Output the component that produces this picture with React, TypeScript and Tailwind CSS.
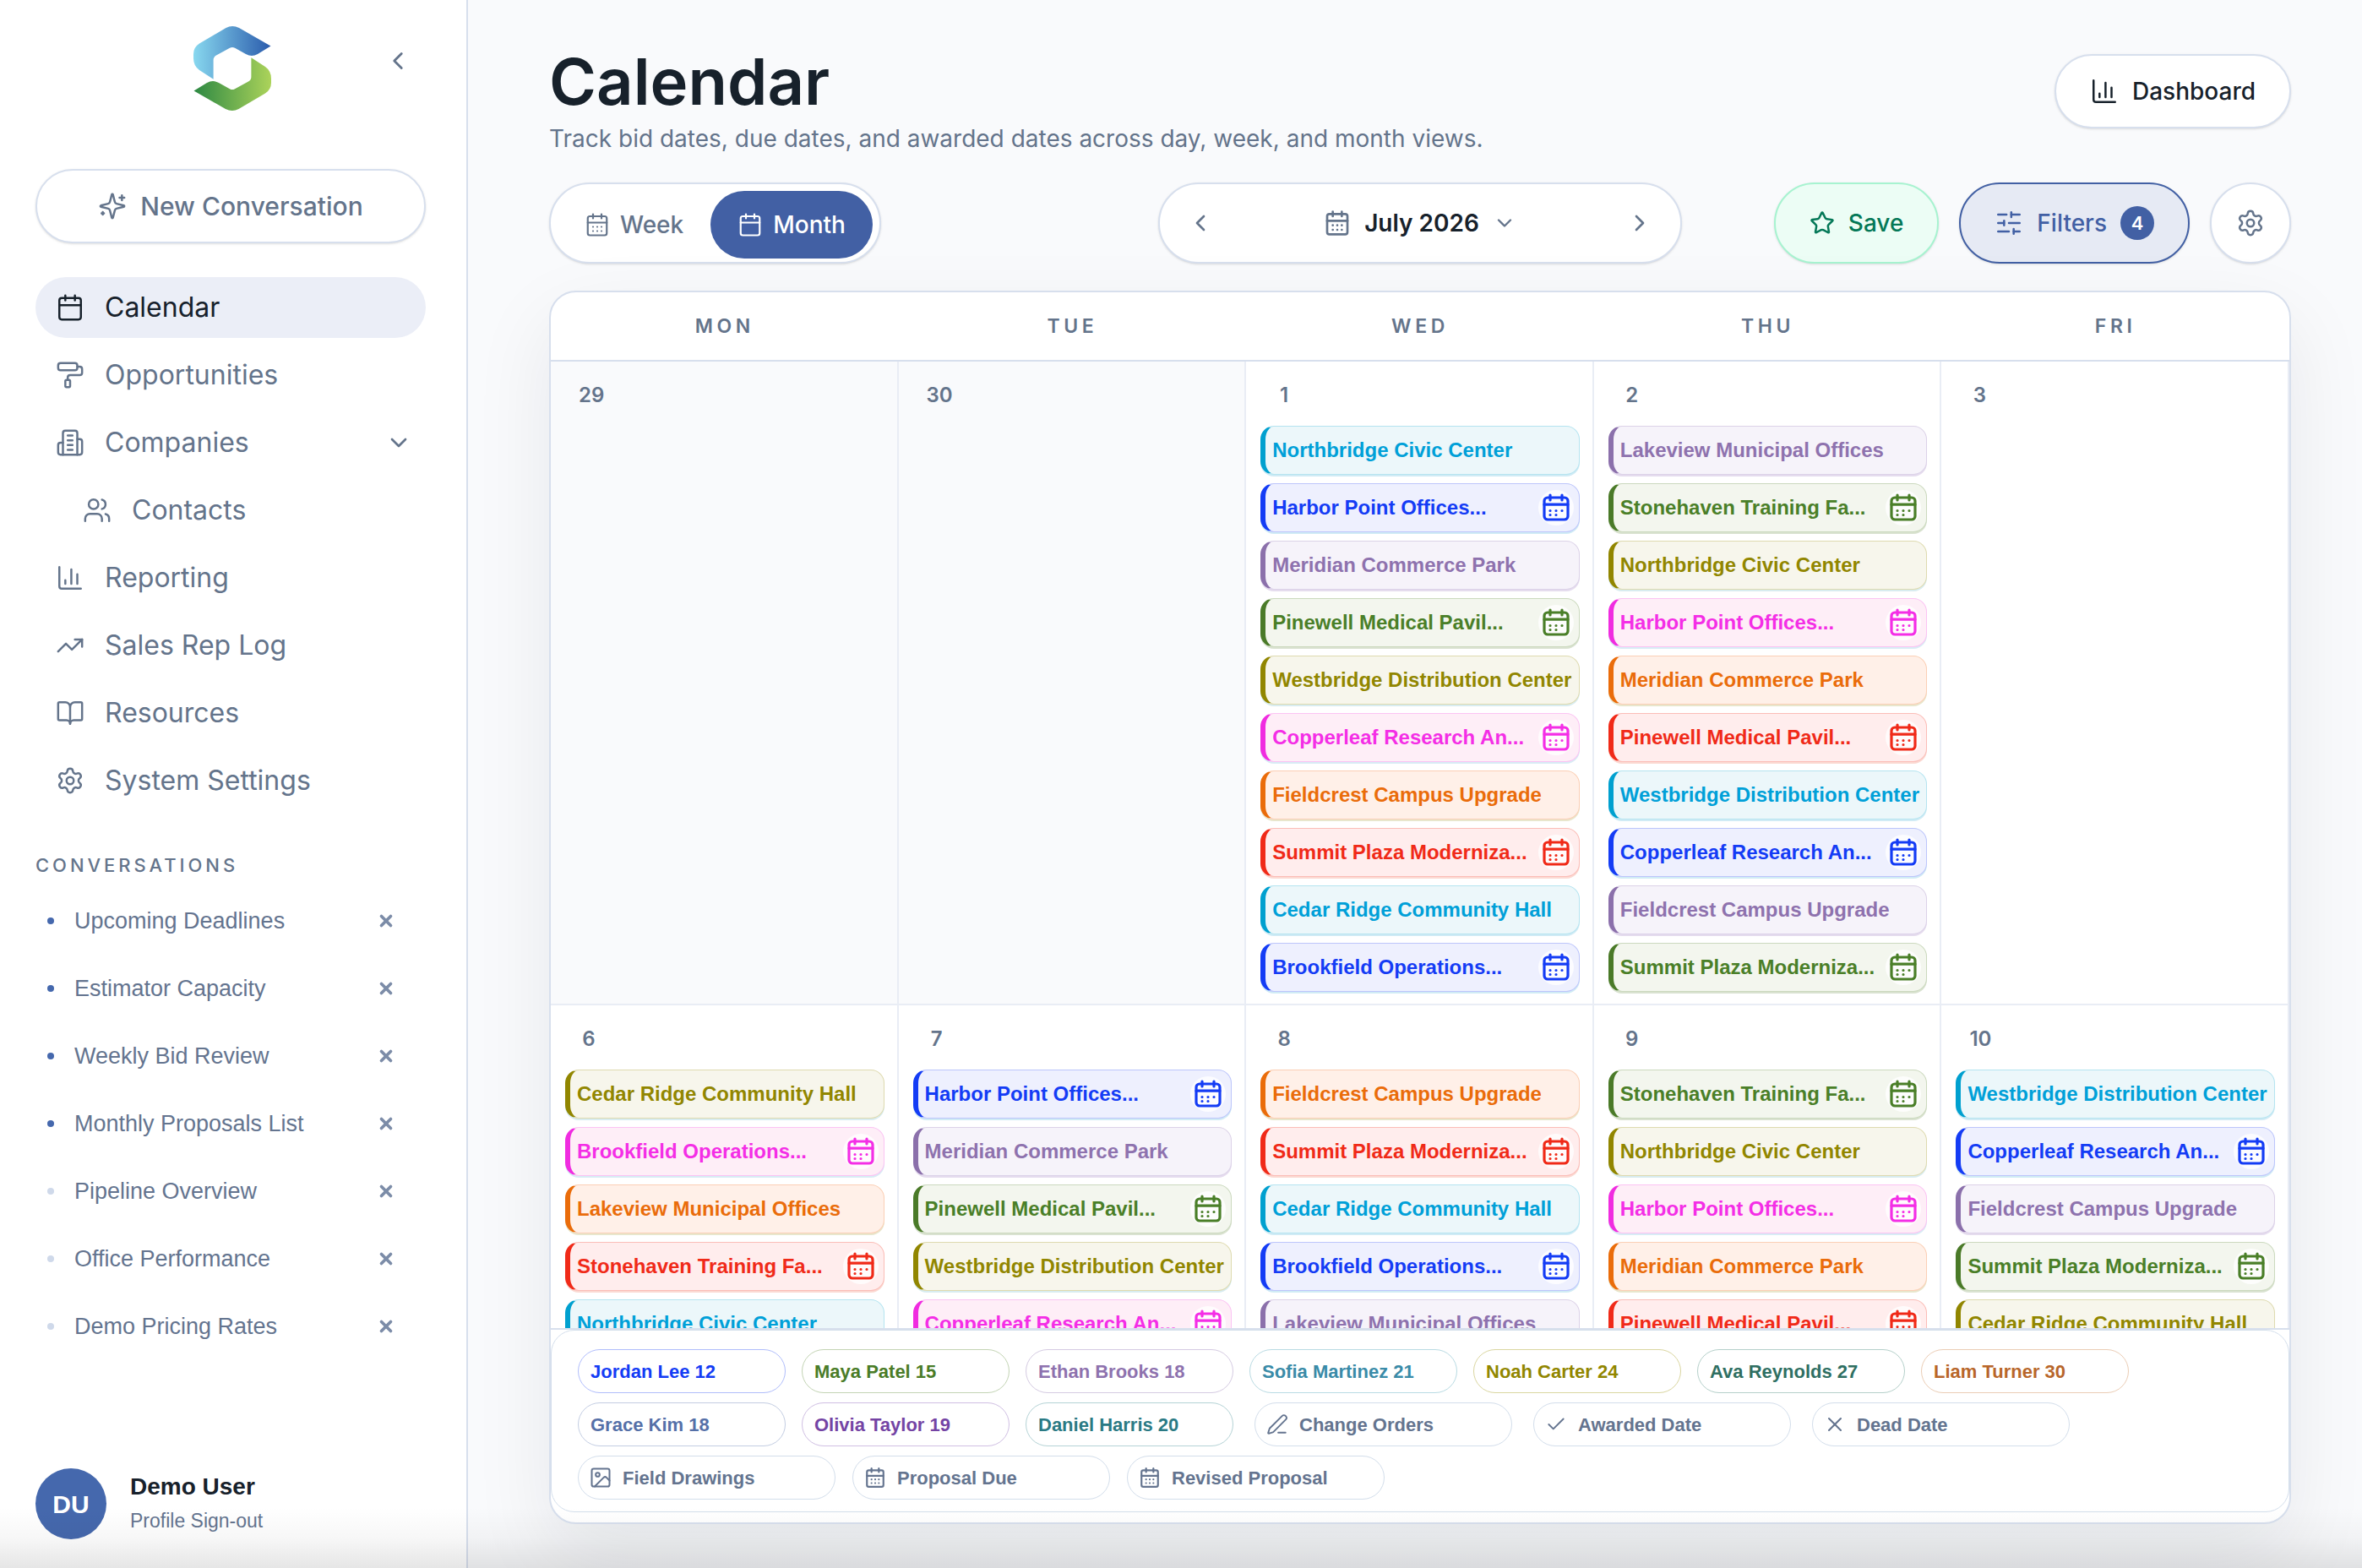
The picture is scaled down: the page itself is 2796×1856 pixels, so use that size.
import { useState } from 'react';
import type { ReactNode } from 'react';
import {
  BookOpen,
  Calendar,
  CalendarDays,
  ChartColumn,
  Check,
  ChevronDown,
  ChevronLeft,
  ChevronRight,
  Image,
  PaintRoller,
  PenLine,
  Settings,
  SlidersHorizontal,
  Star,
  TrendingUp,
  Users,
  X,
} from 'lucide-react';

const Logo = () => (
  <svg viewBox="0 0 92 100" className="h-[100px] w-[92px]" role="img" aria-label="Company logo">
    <defs>
      <linearGradient id="logo-blue" gradientUnits="userSpaceOnUse" x1="0" y1="0" x2="92" y2="0">
        <stop offset="0" stopColor="#88d8ef" />
        <stop offset="1" stopColor="#2a5bac" />
      </linearGradient>
      <linearGradient id="logo-green" gradientUnits="userSpaceOnUse" x1="92" y1="0" x2="0" y2="0">
        <stop offset="0" stopColor="#2c8843" />
        <stop offset="1" stopColor="#acd35a" />
      </linearGradient>
      <path
        id="logo-half"
        d="M91.5 23.5 54 2Q46-2 38.5 2L7 20.500Q0 25 0 33V38Q0 47 7 52L23.600 62.700V40Q23.600 36.500 27 34.500L43 25.800Q46 24 49 25.800L62 33Q69 37 76 33Z"
      />
    </defs>
    <use href="#logo-half" fill="url(#logo-blue)" />
    <use href="#logo-half" fill="url(#logo-green)" transform="rotate(180 46 50)" />
  </svg>
);

const SparklesIcon = () => (
  <svg
    viewBox="0 0 24 24"
    className="size-[34px]"
    fill="none"
    stroke="currentColor"
    strokeWidth={1.75}
    strokeLinecap="round"
    strokeLinejoin="round"
  >
    <path d="M9.937 15.500A2 2 0 0 0 8.500 14.063l-6.135-1.582a.5.5 0 0 1 0-.962L8.500 9.936A2 2 0 0 0 9.937 8.500l1.582-6.135a.5.5 0 0 1 .963 0L14.063 8.500A2 2 0 0 0 15.500 9.937l6.135 1.581a.5.5 0 0 1 0 .964L15.500 14.063a2 2 0 0 0-1.437 1.437l-1.582 6.135a.5.5 0 0 1-.963 0z" />
    <path d="M20 3v4M22 5h-4M4 17v2M5 18H3" />
  </svg>
);

const BuildingIcon = () => (
  <svg
    viewBox="0 0 24 24"
    className="size-[34px]"
    fill="none"
    stroke="currentColor"
    strokeWidth={1.75}
    strokeLinecap="round"
    strokeLinejoin="round"
  >
    <path d="M6 22V4a2 2 0 0 1 2-2h8a2 2 0 0 1 2 2v18Z" />
    <path d="M6 12H4a2 2 0 0 0-2 2v6a2 2 0 0 0 2 2h2M18 9h2a2 2 0 0 1 2 2v9a2 2 0 0 1-2 2h-2" />
    <path d="M10 6h4M10 10h4M10 14h4M10 18h4" />
  </svg>
);

const ScheduleIcon = () => (
  <svg
    viewBox="-18 -18 36 36"
    className="size-9"
    fill="none"
    stroke="currentColor"
    strokeWidth={3.2}
    strokeLinecap="round"
    strokeLinejoin="round"
  >
    <rect x="-14" y="-12" width="28" height="26" rx="4" />
    <path d="M-14-3.800h28M-7-15v6M7-15v6" />
    <path d="M-7 3.500h.01M0 3.500h.01M7 3.500h.01M-7 8.500h.01M0 8.500h.01" />
  </svg>
);

const navItems: { label: string; icon: ReactNode; active?: boolean; nested?: boolean; expandable?: boolean }[] = [
  { label: 'Calendar', icon: <Calendar size={34} strokeWidth={1.75} />, active: true },
  { label: 'Opportunities', icon: <PaintRoller size={34} strokeWidth={1.75} /> },
  { label: 'Companies', icon: <BuildingIcon />, expandable: true },
  { label: 'Contacts', icon: <Users size={34} strokeWidth={1.75} />, nested: true },
  { label: 'Reporting', icon: <ChartColumn size={34} strokeWidth={1.75} /> },
  { label: 'Sales Rep Log', icon: <TrendingUp size={34} strokeWidth={1.75} /> },
  { label: 'Resources', icon: <BookOpen size={34} strokeWidth={1.75} /> },
  { label: 'System Settings', icon: <Settings size={34} strokeWidth={1.75} /> },
];

const conversations = [
  { title: 'Upcoming Deadlines', unread: true },
  { title: 'Estimator Capacity', unread: true },
  { title: 'Weekly Bid Review', unread: true },
  { title: 'Monthly Proposals List', unread: true },
  { title: 'Pipeline Overview', unread: false },
  { title: 'Office Performance', unread: false },
  { title: 'Demo Pricing Rates', unread: false },
];

const projects = [
  { name: 'Northbridge Civic Center', scheduled: false },
  { name: 'Harbor Point Offices...', scheduled: true },
  { name: 'Meridian Commerce Park', scheduled: false },
  { name: 'Pinewell Medical Pavil...', scheduled: true },
  { name: 'Westbridge Distribution Center', scheduled: false },
  { name: 'Copperleaf Research An...', scheduled: true },
  { name: 'Fieldcrest Campus Upgrade', scheduled: false },
  { name: 'Summit Plaza Moderniza...', scheduled: true },
  { name: 'Cedar Ridge Community Hall', scheduled: false },
  { name: 'Brookfield Operations...', scheduled: true },
  { name: 'Lakeview Municipal Offices', scheduled: false },
  { name: 'Stonehaven Training Fa...', scheduled: true },
];

const tones = [
  'border-[#b5e4f0] border-l-[#00a0cf] bg-[#ecf7fa] text-[#00a0d8] shadow-[0_2px_0_#d0ebf5]',
  'border-[#bcc5fb] border-l-[#143cf5] bg-[#eef0fe] text-[#143cf5] shadow-[0_2px_0_#d0ebf5]',
  'border-[#dcd2e8] border-l-[#8b70ab] bg-[#f6f3fa] text-[#8e72ae] shadow-[0_2px_0_#e5dcee]',
  'border-[#cbd9be] border-l-[#4a7a28] bg-[#f3f6ee] text-[#4a7f28] shadow-[0_2px_0_#d9e2d0]',
  'border-[#dedaaf] border-l-[#918600] bg-[#f7f6ec] text-[#918600] shadow-[0_2px_0_#d8ecf0]',
  'border-[#fbc3f3] border-l-[#f02ce0] bg-[#feeef7] text-[#f42ee6] shadow-[0_2px_0_#d8ecf5]',
  'border-[#fbcfb5] border-l-[#ea6c0a] bg-[#fff0e8] text-[#ea6c0a] shadow-[0_2px_0_#e8e6cc]',
  'border-[#fbbdb7] border-l-[#f02a18] bg-[#ffeded] text-[#f02a18] shadow-[0_2px_0_#fbd9d2]',
];

type Day = { date: number; outside?: boolean; project?: number; tone?: number; count?: number };

const weeks: Day[][] = [
  [
    { date: 29, outside: true },
    { date: 30, outside: true },
    { date: 1, project: 0, tone: 0, count: 10 },
    { date: 2, project: 10, tone: 2, count: 10 },
    { date: 3 },
  ],
  [
    { date: 6, project: 8, tone: 4, count: 5 },
    { date: 7, project: 1, tone: 1, count: 5 },
    { date: 8, project: 6, tone: 6, count: 5 },
    { date: 9, project: 11, tone: 3, count: 5 },
    { date: 10, project: 4, tone: 0, count: 5 },
  ],
];

// projects and tones rotate independently from the day's starting offsets
const eventsFor = ({ project = 0, tone = 0, count = 0 }: Day) =>
  Array.from({ length: count }, (_, i) => ({
    ...projects[(project + i) % projects.length],
    tone: tones[(tone + i) % tones.length],
  }));

const firstReps = [
  { label: 'Jordan Lee 12', tone: 'border-[#b0bdfb] text-[#143cf5]' },
  { label: 'Maya Patel 15', tone: 'border-[#c3d4b4] text-[#4a7c28]' },
  { label: 'Ethan Brooks 18', tone: 'border-[#d5cbe2] text-[#8e72ae]' },
  { label: 'Sofia Martinez 21', tone: 'border-[#b9dbe3] text-[#3a8ba8]' },
  { label: 'Noah Carter 24', tone: 'border-[#dad6a0] text-[#918600]' },
  { label: 'Ava Reynolds 27', tone: 'border-[#b5d0ca] text-[#2f6f62]' },
  { label: 'Liam Turner 30', tone: 'border-[#ebcdb5] text-[#b8662a]' },
];

const secondReps = [
  { label: 'Grace Kim 18', tone: 'border-[#c3cde2] text-[#5570a8]' },
  { label: 'Olivia Taylor 19', tone: 'border-[#d0bfe3] text-[#7444a4]' },
  { label: 'Daniel Harris 20', tone: 'border-[#b5d3d6] text-[#2a7a84]' },
];

const RepPill = ({ label, tone }: { label: string; tone: string }) => (
  <li className={`flex h-[52px] w-[246px] items-center rounded-full border bg-white pl-3.5 text-[22px] font-bold ${tone}`}>
    {label}
  </li>
);

const StatusPill = ({ label, icon }: { label: string; icon: ReactNode }) => (
  <li className="flex h-[52px] w-[305px] items-center gap-3 rounded-full border border-[#d3deeb] bg-white pl-3 text-[22px] font-bold text-[#64748f]">
    <span className="flex w-7 justify-center">{icon}</span>
    {label}
  </li>
);

const Sidebar = () => (
  <aside className="flex w-[554px] shrink-0 flex-col border-r-2 border-[#d7dfed] bg-white pt-[31px] pr-12 pb-[34px] pl-[42px]">
    <div className="grid grid-cols-[1fr_auto_1fr] items-start pl-1">
      <span />
      <Logo />
      <button type="button" aria-label="Collapse sidebar" className="mt-6 mr-4 justify-self-end text-[#64748b]">
        <ChevronLeft size={34} />
      </button>
    </div>

    <button
      type="button"
      className="mt-[69px] flex h-[88px] shrink-0 items-center justify-center gap-4 rounded-full border-2 border-[#d7dfed] bg-white text-[30px] font-medium text-[#64748b] shadow-sm"
    >
      <SparklesIcon />
      New Conversation
    </button>

    <nav className="mt-10 flex flex-col gap-2">
      {navItems.map((item) => (
        <a
          key={item.label}
          href="#"
          aria-current={item.active ? 'page' : undefined}
          className={`flex h-[72px] items-center gap-6 rounded-full pr-4 text-[32px] ${item.nested ? 'pl-14' : 'pl-6'} ${
            item.active ? 'bg-[#ebeef7] text-[#17212b]' : 'text-[#64748b]'
          }`}
        >
          {item.icon}
          <span className="flex-1">{item.label}</span>
          {item.expandable && <ChevronDown size={32} />}
        </a>
      ))}
    </nav>

    <h2 className="mt-12 text-[22px] leading-8 font-medium tracking-[0.18em] text-[#64748b]">CONVERSATIONS</h2>
    <ul className="mt-2.5 font-['Liberation_Sans',Arial,sans-serif] text-[27px] text-[#64748f]">
      {conversations.map((c) => (
        <li key={c.title} className="flex h-20 items-center pr-9 pl-3.5">
          <span className={`size-2 rounded-full ${c.unread ? 'bg-[#4568ad]' : 'bg-[#cfd9ea]'}`} />
          <a href="#" className="ml-6 flex-1">
            {c.title}
          </a>
          <button type="button" aria-label={`Remove ${c.title}`} className="text-[#7c8ca8]">
            <X size={22} strokeWidth={4} />
          </button>
        </li>
      ))}
    </ul>

    <div className="mt-auto flex items-center gap-7 font-['Liberation_Sans',Arial,sans-serif]">
      <span className="flex size-[84px] items-center justify-center rounded-full bg-[#4568ad] text-[30px] font-bold text-white">
        DU
      </span>
      <div>
        <p className="text-[28px] leading-10 font-bold text-[#17212b]">Demo User</p>
        <a href="#" className="block text-[23px] leading-10 text-[#64748f]">
          Profile Sign-out
        </a>
      </div>
    </div>
  </aside>
);

const Toolbar = () => {
  const [view, setView] = useState('Month');

  return (
    <div className="mt-[34px] grid grid-cols-[1fr_auto_1fr] items-center text-[28px]">
      <div className="flex h-24 items-start justify-self-start rounded-full border-2 border-[#d7dfed] bg-white p-2 font-medium shadow-sm">
        {['Week', 'Month'].map((name) => (
          <button
            key={name}
            type="button"
            aria-pressed={view === name}
            onClick={() => setView(name)}
            className={`flex h-20 items-center gap-3 rounded-full px-8 ${
              view === name ? 'bg-[#4260a4] text-white' : 'text-[#64748b]'
            }`}
          >
            {name === 'Week' ? <CalendarDays size={30} strokeWidth={1.75} /> : <Calendar size={30} strokeWidth={1.75} />}
            {name}
          </button>
        ))}
      </div>

      <div className="flex h-24 w-[620px] items-center justify-between rounded-full border-2 border-[#d7dfed] bg-white px-8 text-[#64748b] shadow-sm">
        <button type="button" aria-label="Previous month">
          <ChevronLeft size={32} />
        </button>
        <button type="button" className="flex items-center gap-4">
          <CalendarDays size={32} strokeWidth={2} />
          <span className="font-semibold text-[#17212b]">July 2026</span>
          <ChevronDown size={28} />
        </button>
        <button type="button" aria-label="Next month">
          <ChevronRight size={32} />
        </button>
      </div>

      <div className="flex gap-6 justify-self-end font-medium">
        <button
          type="button"
          className="flex h-24 items-center gap-4 rounded-full border-2 border-[#a7f3d0] bg-[#ecfdf5] px-10 text-[#047857] shadow-sm"
        >
          <Star size={30} strokeWidth={2} />
          Save
        </button>
        <button
          type="button"
          className="flex h-24 items-center gap-4 rounded-full border-2 border-[#4260a4] bg-[#e6eaf4] px-10 text-[#4260a4] shadow-sm"
        >
          <SlidersHorizontal size={34} strokeWidth={1.75} />
          Filters
          <span className="flex size-10 items-center justify-center rounded-full bg-[#4260a4] text-[22px] font-semibold text-white">
            4
          </span>
        </button>
        <button
          type="button"
          aria-label="Calendar settings"
          className="flex size-24 items-center justify-center rounded-full border-2 border-[#d7dfed] bg-white text-[#64748b] shadow-sm"
        >
          <Settings size={34} strokeWidth={1.75} />
        </button>
      </div>
    </div>
  );
};

const MonthTable = () => (
  <table className="w-full table-fixed border-separate border-spacing-0">
    <thead>
      <tr>
        {['MON', 'TUE', 'WED', 'THU', 'FRI'].map((day) => (
          <th
            key={day}
            scope="col"
            className="h-[82px] border-b-2 border-[#d7dfed] text-[23px] font-semibold tracking-[0.2em] text-[#64748b]"
          >
            {day}
          </th>
        ))}
      </tr>
    </thead>
    <tbody>
      {weeks.map((week) => (
        <tr key={week[0].date}>
          {week.map((day) => (
            <td
              key={day.date}
              className={`h-[762px] border-r-2 border-b-2 border-[#e9edf5] py-3 pr-[15px] pl-[17px] align-top ${
                day.outside ? 'bg-[#f9fafc]' : 'bg-white'
              }`}
            >
              <div className="inline-flex h-14 min-w-14 items-center justify-center px-4 text-2xl font-semibold text-[#64748b]">
                {day.date}
              </div>
              <ul className="mt-2 flex flex-col gap-2.5 font-['Liberation_Sans',Arial,sans-serif]">
                {eventsFor(day).map((event) => (
                  <li
                    key={event.name}
                    className={`flex h-[58px] items-center justify-between rounded-2xl border border-l-6 pr-1.5 pl-2 text-2xl font-bold whitespace-nowrap ${event.tone}`}
                  >
                    {event.name}
                    {event.scheduled && (
                      <span className="flex size-[42px] items-center justify-center rounded-full bg-white/80">
                        <ScheduleIcon />
                      </span>
                    )}
                  </li>
                ))}
              </ul>
            </td>
          ))}
        </tr>
      ))}
    </tbody>
  </table>
);

const Legend = () => (
  <div className="mb-3 flex flex-col gap-[11px] rounded-[28px] border border-[#d3deeb] bg-white pt-[22px] pb-3.5 pl-[31px] font-['Liberation_Sans',Arial,sans-serif]">
    <ul className="flex gap-[19px]">
      {firstReps.map((rep) => (
        <RepPill key={rep.label} {...rep} />
      ))}
    </ul>
    <div className="flex gap-[25px]">
      <ul className="flex gap-[19px]">
        {secondReps.map((rep) => (
          <RepPill key={rep.label} {...rep} />
        ))}
      </ul>
      <ul className="flex gap-[25px]">
        <StatusPill label="Change Orders" icon={<PenLine size={26} strokeWidth={1.75} />} />
        <StatusPill label="Awarded Date" icon={<Check size={26} strokeWidth={1.75} />} />
        <StatusPill label="Dead Date" icon={<X size={28} strokeWidth={1.75} />} />
      </ul>
    </div>
    <ul className="flex gap-5">
      <StatusPill label="Field Drawings" icon={<Image size={28} strokeWidth={1.75} />} />
      <StatusPill label="Proposal Due" icon={<CalendarDays size={26} strokeWidth={2} />} />
      <StatusPill label="Revised Proposal" icon={<CalendarDays size={26} strokeWidth={2} />} />
    </ul>
  </div>
);

const App = () => (
  <div className="relative flex h-screen overflow-hidden bg-[#f9fafc] font-['Inter',sans-serif]">
    <Sidebar />

    <main className="flex min-w-0 flex-1 flex-col pt-14 pr-[84px] pb-[52px] pl-24">
      <header className="flex items-start justify-between">
        <div>
          <h1 className="text-[76px] leading-[80px] font-semibold text-[#17212b]">Calendar</h1>
          <p className="mt-2.5 text-[28px] leading-9 text-[#64748b]">
            Track bid dates, due dates, and awarded dates across day, week, and month views.
          </p>
        </div>
        <button
          type="button"
          className="mt-2 flex h-[88px] items-center gap-4 rounded-full border-2 border-[#d7dfed] bg-white px-10 text-[28px] font-medium text-[#17212b] shadow-sm"
        >
          <ChartColumn size={34} strokeWidth={1.75} />
          Dashboard
        </button>
      </header>

      <Toolbar />

      <section className="mt-8 flex min-h-0 flex-1 flex-col overflow-hidden rounded-[32px] border-2 border-[#d7dfed] bg-white shadow-[0_36px_96px_rgba(15,23,42,0.08)]">
        <div className="min-h-0 flex-1 overflow-hidden border-b-2 border-[#d7dfed]">
          <MonthTable />
        </div>
        <Legend />
      </section>
    </main>

    <div className="pointer-events-none absolute inset-x-0 bottom-0 h-[72px] bg-linear-to-b from-transparent via-black/3 to-black/10" />
  </div>
);

export default App;
